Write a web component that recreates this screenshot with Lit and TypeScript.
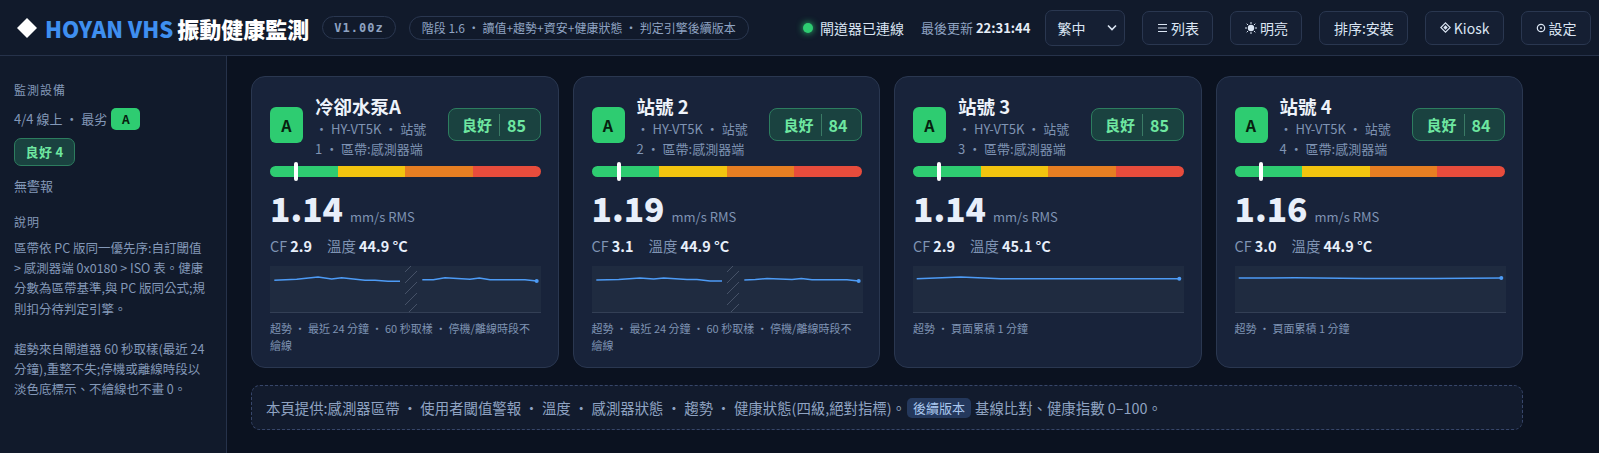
import { LitElement, html, css, svg } from "lit";
import { customElement } from "lit/decorators.js";

type Dev = { name: string; sub: string; score: number; val: string; cf: string; temp: string; pos: number; gap: boolean; foot: string; l1: string; l2: string };

const gapFoot = "超勢 ・ 最近 24 分鐘 ・ 60 秒取樣 ・ 停機/離線時段不繪線";
const l1a = "4.3,14.3 26.7,13.3 48,11 61.7,13 71.7,11.7 95,14.3 105,14.3 118,15.3 130,15.3";
const l2a = "152.3,13.7 163.3,13.7 175,11.7 200,13.3 209.3,12 220,13.7 255,13.7 266.7,15";
const flat3 = "3.7,12.7 47.7,11 87.7,12.7 266.3,12.7";
const flat4 = "3.7,12 60,11.8 130,12.6 200,12.6 266.3,12";

const devs: Dev[] = [
  { name: "冷卻水泵A", sub: "・ HY-VT5K ・ 站號 1 ・ 區帶:感測器端", score: 85, val: "1.14", cf: "2.9", temp: "44.9 °C", pos: 9.6, gap: true, foot: gapFoot, l1: l1a, l2: l2a },
  { name: "站號 2", sub: "・ HY-VT5K ・ 站號 2 ・ 區帶:感測器端", score: 84, val: "1.19", cf: "3.1", temp: "44.9 °C", pos: 10, gap: true, foot: gapFoot, l1: "4.3,14 26.7,13.5 48,12 61.7,13 71.7,12 95,13.5 105,13.5 118,15 130,15", l2: "152.3,14 163.3,13.5 175,12.5 200,13.5 209.3,12.5 220,13.7 255,13.7 266.7,15" },
  { name: "站號 3", sub: "・ HY-VT5K ・ 站號 3 ・ 區帶:感測器端", score: 85, val: "1.14", cf: "2.9", temp: "45.1 °C", pos: 9.6, gap: false, foot: "超勢 ・ 頁面累積 1 分鐘", l1: flat3, l2: "" },
  { name: "站號 4", sub: "・ HY-VT5K ・ 站號 4 ・ 區帶:感測器端", score: 84, val: "1.16", cf: "3.0", temp: "44.9 °C", pos: 9.8, gap: false, foot: "超勢 ・ 頁面累積 1 分鐘", l1: flat4, l2: "" },
];

@customElement("app-root")
export class AppRoot extends LitElement {
  static styles = css`
    :host {
      display: block;
      width: 1599px;
      height: 453px;
      overflow: hidden;
      background: #0b1220;
      color: #e6edf7;
      font-family: "Noto Sans CJK TC", "Noto Sans", sans-serif;
    }
    * { box-sizing: border-box; }
    header {
      height: 56px;
      display: flex;
      align-items: center;
      padding: 0 8px 0 17px;
      background: #111a2b;
      border-bottom: 1px solid #26324a;
    }
    .logo { font-size: 22px; font-weight: 800; line-height: 1; color: #fff; display: flex; align-items: center; gap: 7px; white-space: nowrap; }
    .logo .dia { width: 20px; height: 20px; flex: none; margin-right: 1px; }
    .logo .en { color: #3f8ff0; margin-right: -3px; }
    .ver { margin-left: 13px; height: 23px; padding: 0 11px; display: flex; align-items: center; border: 1px solid #2a3750; border-radius: 12px; font-weight: 700; color: #8fa3c2; letter-spacing: 1px; font-family: "DejaVu Sans Mono", monospace; font-size: 12px; }
    .stage { margin-left: 13px; height: 24px; padding: 0 12px; display: flex; align-items: center; border: 1px solid #2a3750; border-radius: 12px; font-size: 12px; color: #8fa3c2; white-space: nowrap; }
    .right { margin-left: auto; display: flex; align-items: center; }
    .conn { display: flex; align-items: center; font-size: 14px; color: #dbe5f3; white-space: nowrap; }
    .dot { width: 10px; height: 10px; margin: 0 7px 0 0; border-radius: 50%; background: #2ecc71; box-shadow: 0 0 7px #2ecc71; }
    .upd { margin-left: 17px; font-size: 13px; color: #8fa3c2; white-space: nowrap; }
    .upd b { color: #e6edf7; font-size: 13px; font-weight: 700; }
    .sel, .btn { height: 34px; border: 1px solid #2a3750; border-radius: 7px; background: #151f33; color: #dbe5f3; font-size: 14px; display: flex; align-items: center; white-space: nowrap; font-family: inherit; }
    .sel { margin-left: 15px; width: 80px; height: 36px; padding: 0 7px 0 11px; justify-content: space-between; }
    .btn { margin-left: 17px; padding: 0 13.5px; gap: 3px; }
    .btn svg { flex: none; }
    .body { display: flex; height: 397px; }
    aside {
      width: 227px;
      flex: none;
      padding: 24px 14px;
      background: #111a2b;
      border-right: 1px solid #26324a;
      font-size: 13px;
      color: #8398b8;
      line-height: 20px;
    }
    .h { font-size: 12px; letter-spacing: 1px; }
    .row { margin-top: 8px; display: flex; align-items: center; gap: 4px; height: 22px; white-space: nowrap; }
    .grade-s { width: 29px; height: 22px; border-radius: 5px; background: #2ecc71; color: #07210f; font-weight: 700; font-size: 12px; display: flex; align-items: center; justify-content: center; }
    .pill { margin-top: 8px; width: 61px; height: 28px; display: flex; align-items: center; justify-content: center; border-radius: 7px; border: 1px solid #2d7d5f; background: #1a4240; color: #6ee7a0; font-weight: 700; font-size: 13px; letter-spacing: 0.3px; }
    .none { margin-top: 10px; }
    .h2 { margin-top: 16px; font-size: 12px; letter-spacing: 1px; }
    .desc { margin: 6px 0 0; width: 196px; font-size: 12.5px; line-height: 20.2px; }
    .desc p { margin: 0 0 20px; }
    main { flex: 1; padding: 20px 24px 0; min-width: 0; }
    .grid { display: grid; grid-template-columns: repeat(4, 307.5px); gap: 14px; }
    .card {
      height: 292px;
      background: #18233a;
      border: 1px solid #2a3750;
      border-radius: 14px;
      padding: 18px 17px 0 18px;
    }
    .top { display: flex; align-items: flex-start; height: 64px; }
    .grade { width: 33px; height: 36px; margin: 12px 12px 0 0; flex: none; border-radius: 6px; background: #2ecc71; color: #07210f; font-weight: 700; font-size: 16px; display: flex; align-items: center; justify-content: center; }
    .ident { width: 118px; flex: none; }
    .name { font-size: 18.5px; font-weight: 700; color: #eef3fb; line-height: 24px; margin: -1px 0 1px; white-space: nowrap; }
    .sub { font-size: 13px; line-height: 20px; color: #7f93b3; }
    .badge { flex: none; width: 93px; height: 33px; margin: 13px 0 0 auto; display: flex; align-items: center; justify-content: center; border: 1px solid #2d7d5f; border-radius: 8px; background: #1a4240; color: #6ee7a0; font-weight: 700; font-size: 15px; }
    .badge i { width: 1px; height: 22px; background: #3a7a65; margin: 0 7px; }
    .badge span { font-size: 16px; }
    .barw { position: relative; margin-top: 7px; }
    .bar { display: flex; height: 11px; border-radius: 6px; overflow: hidden; }
    .bar span { flex: 1; }
    .g { background: #2ecc71; }
    .y { background: #f1c40f; }
    .o { background: #e67e22; }
    .r { background: #e74c3c; }
    .mark { position: absolute; top: -4px; width: 4px; height: 19px; background: #fff; border-radius: 2px; margin-left: -2px; }
    .value { display: flex; align-items: baseline; gap: 7px; margin-top: 8px; height: 46px; line-height: 46px; }
    .value b { font-size: 33.5px; font-weight: 800; color: #e8effa; }
    .value span { font-size: 13px; color: #7f93b3; }
    .meta { margin-top: 5px; font-size: 14.4px; line-height: 20px; color: #7f93b3; display: flex; gap: 15px; }
    .meta b { color: #e8effa; font-weight: 700; }
    .chart { display: block; margin-top: 10px; }
    .foot { margin-top: 7px; font-size: 11px; line-height: 16.5px; color: #7f93b3; }
    .note { margin-top: 17px; width: 1272px; height: 45px; border: 1px dashed #37466a; border-radius: 9px; background: #121b2d; padding: 0 14px; display: flex; align-items: center; font-size: 14.4px; color: #8fa3c2; white-space: nowrap; }
    .tag { margin: 0 4px 0 1px; height: 20px; padding: 0 6px; border-radius: 5px; background: #24385c; color: #a9c7ee; font-size: 13px; display: inline-flex; align-items: center; }
  `;

  private chart(d: Dev, i: number) {
    const last = (d.l2 || d.l1).split(" ").pop()!.split(",");
    return html`<svg class="chart" width="271" height="47" viewBox="0 0 271 47">
      <rect width="271" height="47" fill="#1f2b40" />
      ${d.gap
        ? svg`<clipPath id=${"cp" + i}><rect x="135" width="12" height="46" /></clipPath>
        <g clip-path=${"url(#cp" + i + ")"}>${[8, 19, 30, 41, 52, 63].map((y) => svg`<line x1="133" y1=${y} x2="149" y2=${y - 16} stroke="#465268" stroke-width="1" />`)}</g>`
        : ""}
      <line x1="0" y1="46.5" x2="271" y2="46.5" stroke="#333f55" stroke-width="1" />
      <polyline points=${d.l1} fill="none" stroke="#4d9bf5" stroke-width="1.5" />
      ${d.l2 ? svg`<polyline points=${d.l2} fill="none" stroke="#4d9bf5" stroke-width="1.5" />` : ""}
      <circle cx=${last[0]} cy=${last[1]} r="2" fill="#4d9bf5" />
    </svg>`;
  }

  render() {
    return html`
      <header>
        <div class="logo">
          <svg class="dia" viewBox="0 0 20 20"><path d="M10 0 20 10 10 20 0 10Z" fill="#fff" /></svg>
          <span class="en">HOYAN VHS</span><span>振動健康監測</span>
        </div>
        <div class="ver">V1.00z</div>
        <div class="stage">階段 1.6 ・ 讀值+趨勢+資安+健康狀態 ・ 判定引擎後續版本</div>
        <div class="right">
          <div class="conn"><span class="dot"></span>閘道器已連線</div>
          <div class="upd">最後更新 <b>22:31:44</b></div>
          <div class="sel">繁中
            <svg width="10" height="7" viewBox="0 0 10 7"><path d="M1 1.5 5 5.5 9 1.5" fill="none" stroke="#dbe5f3" stroke-width="1.6" /></svg>
          </div>
          <div class="btn">
            <svg width="11" height="10" viewBox="0 0 11 10"><path d="M1 1.5H10M1 5H10M1 8.5H10" stroke="#dbe5f3" stroke-width="1.2" /></svg>列表
          </div>
          <div class="btn">
            <svg width="12" height="12" viewBox="0 0 12 12"><circle cx="6" cy="6" r="3.2" fill="#dbe5f3" /><path d="M6 0V2M6 10V12M0 6H2M10 6H12M1.7 1.7 3 3M9 9 10.3 10.3M1.7 10.3 3 9M9 3 10.3 1.7" stroke="#dbe5f3" stroke-width="1" /></svg>明亮
          </div>
          <div class="btn">排序:安裝</div>
          <div class="btn">
            <svg width="11" height="11" viewBox="0 0 11 11"><path d="M5.5.8 10.2 5.5 5.5 10.2 .8 5.5Z" fill="none" stroke="#dbe5f3" stroke-width="1.1" /><path d="M5.5 3.3 7.7 5.5 5.5 7.7 3.3 5.5Z" fill="#dbe5f3" /></svg>Kiosk
          </div>
          <div class="btn">
            <svg width="10" height="10" viewBox="0 0 10 10"><circle cx="5" cy="5" r="3.7" fill="none" stroke="#dbe5f3" stroke-width="1.2" /><circle cx="5" cy="5" r="1" fill="#dbe5f3" /></svg>設定
          </div>
        </div>
      </header>
      <div class="body">
        <aside>
          <div class="h">監測設備</div>
          <div class="row">4/4 線上 ・ 最劣<span class="grade-s">A</span></div>
          <div class="pill">良好 4</div>
          <div class="none">無警報</div>
          <div class="h2">說明</div>
          <div class="desc">
            <p>區帶依 PC 版同一優先序:自訂閾值 &gt; 感測器端 0x0180 &gt; ISO 表。健康分數為區帶基準,與 PC 版同公式;規則扣分待判定引擎。</p>
            <p>趨勢來自閘道器 60 秒取樣(最近 24 分鐘),重整不失;停機或離線時段以淡色底標示、不繪線也不畫 0。</p>
          </div>
        </aside>
        <main>
          <div class="grid">
            ${devs.map(
              (d, i) => html`<div class="card">
                <div class="top">
                  <div class="grade">A</div>
                  <div class="ident">
                    <div class="name">${d.name}</div>
                    <div class="sub">${d.sub}</div>
                  </div>
                  <div class="badge">良好<i></i><span>${d.score}</span></div>
                </div>
                <div class="barw">
                  <div class="bar"><span class="g"></span><span class="y"></span><span class="o"></span><span class="r"></span></div>
                  <div class="mark" style="left:${d.pos}%"></div>
                </div>
                <div class="value"><b>${d.val}</b><span>mm/s RMS</span></div>
                <div class="meta"><span>CF <b>${d.cf}</b></span><span>溫度 <b>${d.temp}</b></span></div>
                ${this.chart(d, i)}
                <div class="foot">${d.foot}</div>
              </div>`
            )}
          </div>
          <div class="note">本頁提供:感測器區帶 ・ 使用者閾值警報 ・ 溫度 ・ 感測器狀態 ・ 趨勢 ・ 健康狀態(四級,絕對指標)。<span class="tag">後續版本</span>基線比對、健康指數 0–100。</div>
        </main>
      </div>
    `;
  }
}
